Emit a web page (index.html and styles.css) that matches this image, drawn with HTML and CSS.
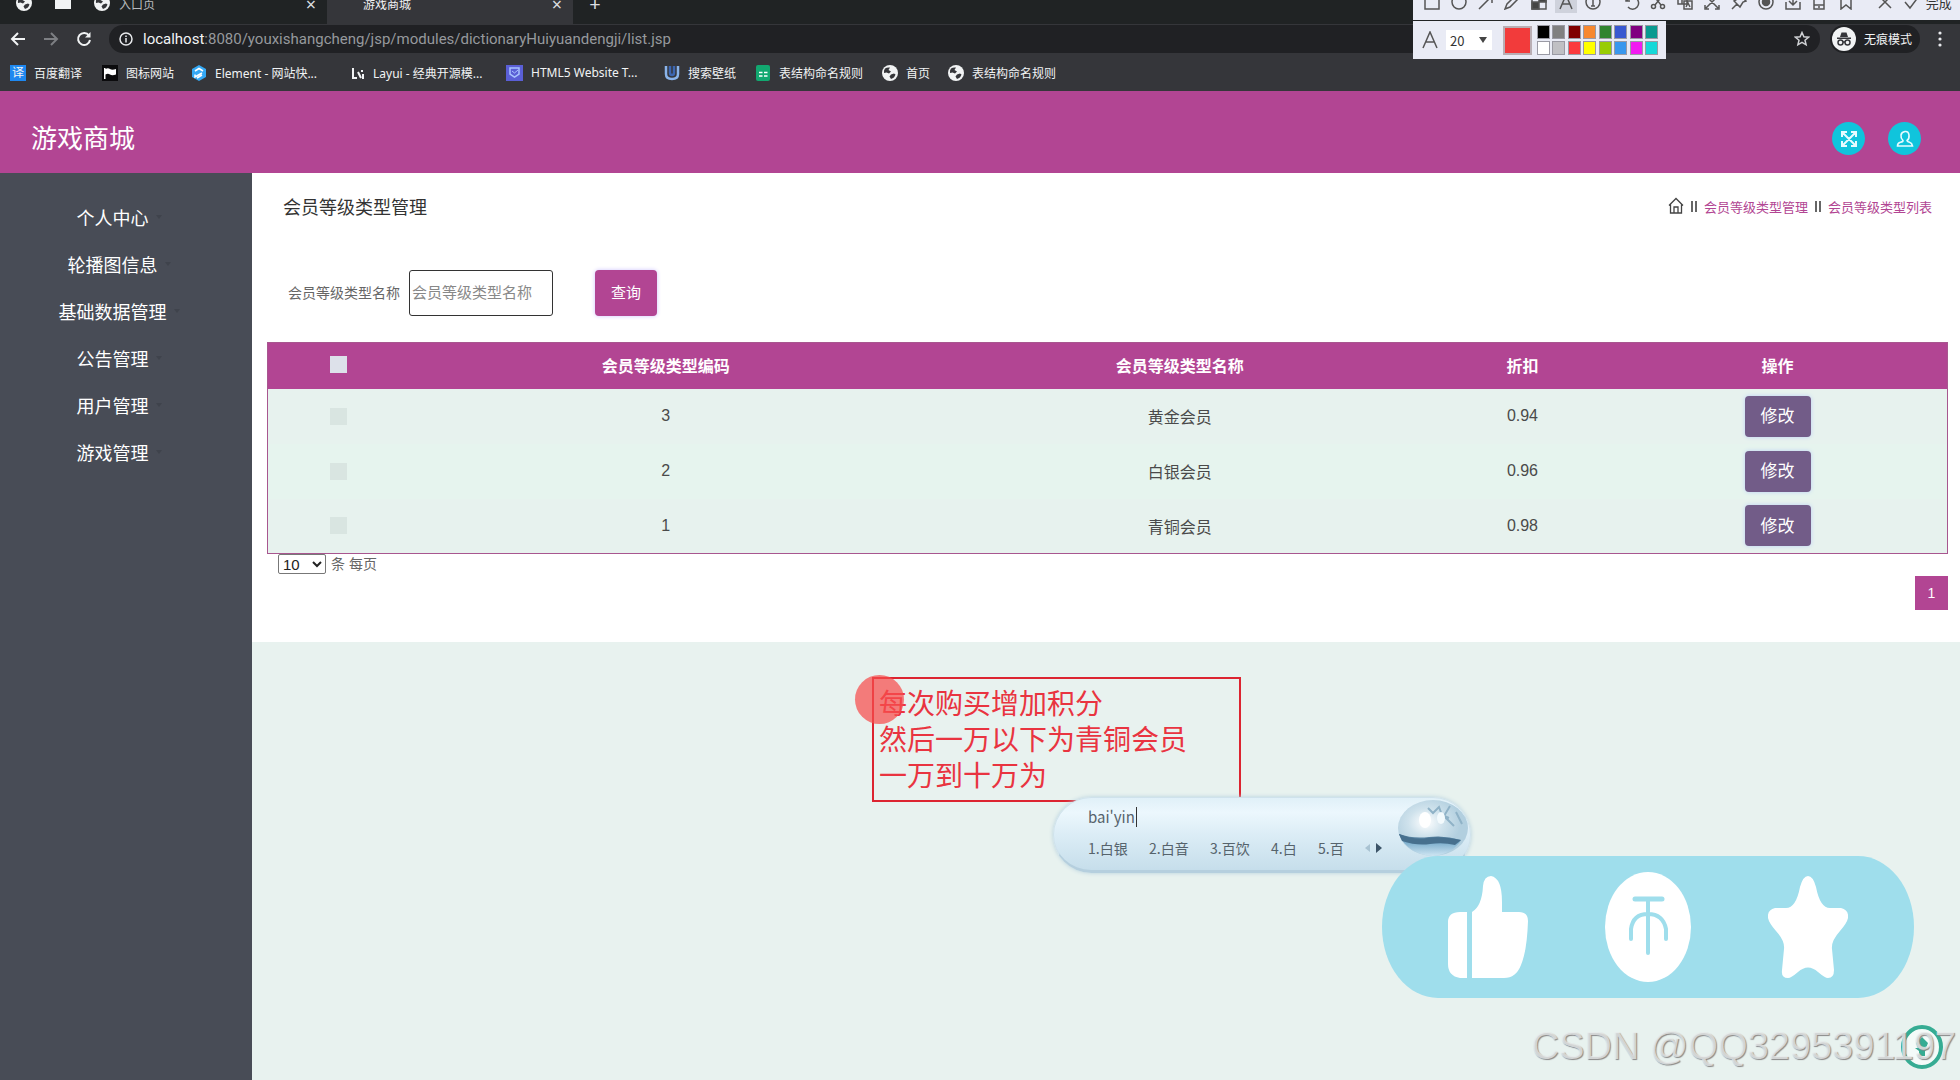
FILE: index.html
```html
<!DOCTYPE html>
<html lang="zh-CN">
<head>
<meta charset="utf-8">
<title>游戏商城</title>
<link rel="stylesheet" href="styles.css">
</head>
<body>
<svg class="defs" width="0" height="0" aria-hidden="true">
  <symbol id="globe" viewBox="0 0 16 16"><circle cx="8" cy="8" r="8" fill="#f1f3f4"/><path d="M3 3.500Q5 2 8 2.500L6.500 5 9 6.500 7 8.500 4.500 7.500 2 8Q1.600 5 3 3.500ZM9 9.500 12 8.500 13.500 9.500Q12.500 13 9 14L7.500 11.500Z" fill="#35363a"/></symbol>
</svg>
<div class="browser">
  <div class="tabs">
    <span class="pin"><svg width="16" height="16"><use href="#globe"/></svg></span>
    <span class="pin"><svg width="16" height="16"><path d="M0 2h16v12H0z" fill="#f1f3f4"/></svg></span>
    <span class="tab"><svg width="16" height="16"><use href="#globe"/></svg><span>入口页</span><button class="x" aria-label="关闭">×</button></span>
    <span class="tab active"><span>游戏商城</span><button class="x" aria-label="关闭">×</button></span>
    <button class="x add" aria-label="新标签页">+</button>
  </div>
  <div class="nav">
    <button class="ico" aria-label="后退"><svg width="16" height="16" fill="none" stroke="#f1f3f4" stroke-width="2"><path d="M15 8H2M8 2 2 8l6 6"/></svg></button>
    <button class="ico" aria-label="前进"><svg width="16" height="16" fill="none" stroke="#7d7f83" stroke-width="2"><path d="M1 8h13M8 2l6 6-6 6"/></svg></button>
    <button class="ico" aria-label="刷新"><svg width="16" height="16" fill="none" stroke="#f1f3f4" stroke-width="2"><path d="M13 4.500A6 6 0 1 0 14 9"/><path d="M14.500 1v5.500H9z" fill="#f1f3f4" stroke="none"/></svg></button>
    <div class="omni">
      <svg width="14" height="14" fill="none" stroke="#e8eaed" stroke-width="1.500"><circle cx="7" cy="7" r="6"/><path d="M7 6v4.500M7 3.500V5"/></svg>
      <span class="url"><b>localhost</b>:8080/youxishangcheng/jsp/modules/dictionaryHuiyuandengji/list.jsp</span>
      <svg width="16" height="16" fill="none" stroke="#d0d2d5" stroke-width="1.500"><path d="m8 1.500 1.900 4.300 4.600.4-3.500 3 1.100 4.600L8 11.400l-4.100 2.400L5 9.200l-3.500-3 4.600-.4z"/></svg>
    </div>
    <span class="incog"><svg width="24" height="24"><circle cx="12" cy="12" r="12" fill="#f1f3f4"/><path d="M8 10 9.500 5.500h5L16 10zM5 10.500h14v1.500H5z" fill="#35363a"/><g fill="none" stroke="#35363a" stroke-width="1.500"><circle cx="8.500" cy="15.500" r="2.500"/><circle cx="15.500" cy="15.500" r="2.500"/><path d="M11 15h2"/></g></svg>无痕模式</span>
    <button class="ico more" aria-label="菜单"><svg width="4" height="16" fill="#e8eaed"><circle cx="2" cy="2" r="1.600"/><circle cx="2" cy="8" r="1.600"/><circle cx="2" cy="14" r="1.600"/></svg></button>
  </div>
  <div class="marks">
    <a href="#"><span class="yi">译</span>百度翻译</a>
    <a href="#"><svg width="16" height="16"><path d="M0 0h16v16H0z" fill="#0b0b0d"/><path d="M2 3v11h1.500V9.500Q6 8 8 9.500t6 0V4Q10 5.500 8 4T3.500 4V3z" fill="#fff"/></svg>图标网站</a>
    <a href="#"><svg width="16" height="16"><path d="m8 0 7 4v8l-7 4-7-4V4z" fill="#35a9f5"/><path d="m4 6 4-2.500L12 6M4 9.500V12l7-4M6 13l5-3" stroke="#fff" stroke-width="1.500" fill="none"/></svg>Element - 网站快...</a>
    <a href="#"><svg width="14" height="16" fill="none" stroke="#f1f3f4" stroke-width="2"><path d="M2 3v10h4M7 7l3 6M11 5v2M12 9v5"/></svg>Layui - 经典开源模...</a>
    <a href="#"><svg width="17" height="16"><path d="M0 0h17v16H0z" fill="#5a5fd6"/><path d="M4 3h9v6l-4.500 3L4 9z" fill="none" stroke="#a9c4ff" stroke-width="1.500"/><path d="m6 6 2.500 2L12 5" stroke="#a9c4ff" fill="none"/></svg>HTML5 Website T...</a>
    <a href="#"><svg width="16" height="16" fill="none" stroke-width="2.500"><path d="M2 1v8q0 5 6 5t6-5V1" stroke="#8ab4ea"/><path d="M6 1v7q0 2 2 2t2-2V1" stroke="#3c66b0"/></svg>搜索壁纸</a>
    <a href="#"><svg width="16" height="16"><rect x="1" width="14" height="16" rx="2" fill="#12a870"/><path d="M4 7.500h3.500M9 7.500h3.500M4 11h3.500M9 11h3.500" stroke="#fff" stroke-width="1.500"/></svg>表结构命名规则</a>
    <a href="#"><svg width="16" height="16"><use href="#globe"/></svg>首页</a>
    <a href="#"><svg width="16" height="16"><use href="#globe"/></svg>表结构命名规则</a>
  </div>
</div>

<header class="top">
  <h1>游戏商城</h1>
  <div class="acts">
    <button class="round" aria-label="全屏"><svg width="18" height="18" fill="none" stroke="#e6fbff" stroke-width="2"><path d="M2 7V2h5M11 2h5v5M16 11v5h-5M7 16H2v-5M2 2l14 14M16 2 2 16"/></svg></button>
    <button class="round" aria-label="个人"><svg width="18" height="18" fill="none" stroke="#e6fbff" stroke-width="1.600"><path d="M7 10.500Q4.500 8 5 5t4-3.500T13 5t-2 5.500q0 1 2.500 1.800T16.500 16h-15Q1.500 13 4.500 12.300T7 10.500z"/></svg></button>
  </div>
</header>

<div class="body">
  <nav class="side">
    <a href="#">个人中心</a><a href="#">轮播图信息</a><a href="#">基础数据管理</a><a href="#">公告管理</a><a href="#">用户管理</a><a href="#">游戏管理</a>
  </nav>
  <main>
    <section class="panel">
      <div class="head">
        <h2>会员等级类型管理</h2>
        <div class="crumb">
          <svg width="16" height="18" fill="none" stroke="#444" stroke-width="1.300"><path d="M1 8.500 8 1.500l7 7M2.500 7.500V16h11V7.500M6 16v-6h4v6"/></svg>
          <i></i><a href="#">会员等级类型管理</a><i></i><a href="#">会员等级类型列表</a>
        </div>
      </div>
      <form class="search">
        <label for="name">会员等级类型名称</label>
        <input id="name" type="text" placeholder="会员等级类型名称">
        <button type="button">查询</button>
      </form>
      <table>
        <colgroup><col class="c1"><col class="c2"><col class="c3"><col class="c4"><col class="c5"></colgroup>
        <thead><tr><th><input type="checkbox" aria-label="全选"></th><th>会员等级类型编码</th><th>会员等级类型名称</th><th>折扣</th><th>操作</th></tr></thead>
        <tbody>
          <tr><td><input type="checkbox" aria-label="选择 3"></td><td>3</td><td>黄金会员</td><td>0.94</td><td><button>修改</button></td></tr>
          <tr><td><input type="checkbox" aria-label="选择 2"></td><td>2</td><td>白银会员</td><td>0.96</td><td><button>修改</button></td></tr>
          <tr><td><input type="checkbox" aria-label="选择 1"></td><td>1</td><td>青铜会员</td><td>0.98</td><td><button>修改</button></td></tr>
        </tbody>
      </table>
      <div class="size"><select id="size"><option>10</option></select><label for="size">条 每页</label></div>
      <div class="pager"><button>1</button></div>
    </section>
  </main>
</div>

<div class="snip">
  <div class="tools">
    <svg width="16" height="16"><path d="M1 1h14v14H1z"/></svg>
    <svg width="16" height="16"><circle cx="8" cy="8" r="7"/></svg>
    <svg width="16" height="16"><path d="M1 15 14 2M7 2h7v7"/></svg>
    <svg width="16" height="16"><path d="m1 15 2-5 9-9 3 3-9 9z"/></svg>
    <svg width="16" height="16"><path d="M1 1h14v14H1z"/><path d="M1 8h7v7H1zM8 1h7v7H8z" fill="#444"/></svg>
    <svg class="on" width="16" height="16"><path d="M2 15 8 1l6 14M4 10h8"/></svg>
    <svg width="16" height="16"><circle cx="8" cy="8" r="7"/><path d="M8 4v8M6 12h4"/></svg>
    <i></i>
    <svg width="16" height="16"><path d="M2 3v4h4M3 7a6 6 0 1 1 1 6"/></svg>
    <svg width="16" height="16"><path d="m3 1 8 10M13 1 5 11"/><circle cx="3.500" cy="12.500" r="2"/><circle cx="12.500" cy="12.500" r="2"/></svg>
    <svg width="16" height="16"><path d="M1 1h9v9H1zM7 7h8v8H7zM1 5h9M5 1v9M9 13l2-4 2 4"/></svg>
    <svg width="16" height="16"><path d="m2 2 12 12M14 2 2 14M1 11v4h4M15 11v4h-4"/></svg>
    <svg width="16" height="16"><path d="m9 1 6 6-3 1-3 5-6-6 5-3zM6 10l-5 5"/></svg>
    <svg width="16" height="16"><circle cx="8" cy="8" r="7"/><circle cx="8" cy="8" r="3.500" fill="#555"/></svg>
    <svg width="16" height="16"><path d="M1 8v7h14V8M8 1v10M4 7l4 4 4-4"/></svg>
    <svg width="16" height="16"><path d="M3 1h10v14H3zM3 11h10M7 13h2"/></svg>
    <svg width="16" height="16"><path d="M3 1h10v14l-5-4-5 4z"/></svg>
    <i></i>
    <svg width="16" height="16"><path d="m2 2 12 12M14 2 2 14"/></svg>
    <button><svg width="16" height="16"><path d="m1 8 5 6 9-12"/></svg>完成</button>
  </div>
  <div class="palette">
    <svg width="18" height="18"><path d="M2 17 9 1l7 16M5 11h8"/></svg>
    <span class="fs">20<svg width="8" height="6"><path class="tri" d="M0 0h8L4 6z"/></svg></span>
    <span class="cur"></span>
    <div class="sw"><b class="k1"></b><b class="k2"></b><b class="k3"></b><b class="k4"></b><b class="k5"></b><b class="k6"></b><b class="k7"></b><b class="k8"></b><b class="k9"></b><b class="k10"></b><b class="k11"></b><b class="k12"></b><b class="k13"></b><b class="k14"></b><b class="k15"></b><b class="k16"></b></div>
  </div>
</div>

<div class="note">每次购买增加积分<br>然后一万以下为青铜会员<br>一万到十万为</div>
<span class="dot"></span>

<div class="ime">
  <div class="typed">bai'yin</div>
  <div class="cands"><span class="w2">1.白银</span><span class="w2">2.白音</span><span class="w2">3.百饮</span><span class="w1">4.白</span><span class="w1">5.百</span>
    <svg width="18" height="10"><path d="M5 1v8L0 5z" fill="#a9c3d2"/><path d="M11 0v10l6-5z" fill="#3c5468"/></svg></div>
  <svg class="orb" width="76" height="60">
    <defs>
      <radialGradient id="og" cx=".4" cy=".4"><stop offset="0" stop-color="#fff"/><stop offset=".5" stop-color="#cfe2ec"/><stop offset="1" stop-color="#b2cfdf"/></radialGradient>
      <linearGradient id="wg" x2="0" y2="1"><stop offset="0" stop-color="#3d6584"/><stop offset=".4" stop-color="#7fb0ce"/><stop offset="1" stop-color="#cfe6f3"/></linearGradient>
    </defs>
    <ellipse cx="39" cy="30" rx="35" ry="28" fill="url(#og)"/>
    <path d="M5 36q14 5 30 3t32 3q-8 14-28 16-26-2-34-22z" fill="url(#wg)"/>
    <path d="M5 36q14 6 28 4t34 2l-6 5q-12-3-25-1T8 43z" fill="#47708e"/>
    <path d="m34 10 5 5 6-6 3 8 7 3M56 8l-6 10 10 10M62 14l6 12" fill="none" stroke="#8fb2c7" stroke-width="2"/>
    <ellipse cx="31" cy="22" rx="6" ry="8" fill="#fff"/>
    <ellipse cx="47" cy="20" rx="4" ry="6" fill="#f3fafd"/>
  </svg>
</div>

<div class="triple">
  <svg width="80" height="102" fill="#fff"><path d="M12 36h7v66h-7Q0 100 0 88V46q0-10 12-10zM24 36q10-6 11-26Q36 0 43 0q11 2 11 26v10h17q9 0 9 9-1 30-7 44-5 13-17 13H24z"/></svg>
  <svg width="86" height="110"><ellipse cx="43" cy="55" rx="43" ry="55" fill="#fff"/><g fill="none" stroke="#9fdeec" stroke-width="4" stroke-linecap="round"><path d="M30 27h27" stroke-width="5"/><path d="M43 28v53M26 67V57q2-15 17-15t18 15v10"/></g></svg>
  <svg width="80" height="102" fill="#fff"><path d="M40 0q5 0 8 11 4 21 14 21h11q8 2 7 10-1 5-8 13-9 10-8 18l2 21q0 8-6 8-3 0-10-6-10-9-20 0-7 6-10 6-7 0-6-8l2-21q1-8-8-18-7-8-8-13-1-8 7-10h11q10 0 14-21 3-11 8-11z"/></svg>
</div>

<svg class="mic" width="42" height="44"><ellipse cx="21" cy="22" rx="19" ry="20" fill="#f4fbf9" stroke="#36ac93" stroke-width="4"/><path d="m21 12 6 6-2 5h3l-4 3v5h-6v-5l-4-3h3l-2-5z" fill="#36ac93"/></svg>
<div class="mark">CSDN @QQ3295391197</div>
</body>
</html>
```
FILE: styles.css
```css
* { box-sizing: border-box; }
body {
  margin: 0;
  min-height: 100vh;
  display: flex;
  flex-direction: column;
  position: relative;
  overflow-x: hidden;
  background: #e8f2ef;
  color: #4a4a4a;
  font-family: "Liberation Sans", "Noto Sans CJK SC", sans-serif;
}
a { text-decoration: none; color: inherit; }
h1, h2 { margin: 0; font-weight: 400; }
button, input, select { font-family: inherit; margin: 0; }
button { padding: 0; border: 0; background: none; color: inherit; }
svg { display: block; flex: none; }
.defs { position: absolute; }

/* browser chrome */
.browser {
  background: #35363a;
  color: #f1f3f4;
  font-family: "Noto Sans", "Noto Sans CJK SC", sans-serif;
  font-size: 12px;
}
.tabs {
  display: flex;
  align-items: flex-start;
  height: 24px;
  background: #202324;
  overflow: hidden;
  line-height: 10px;
}
.tabs svg { margin-top: -5px; }
.pin { width: 40px; padding-left: 12px; }
.pin:first-child { width: 43px; padding-left: 16px; }
.tab { display: flex; align-items: flex-start; gap: 9px; width: 244px; height: 24px; padding-left: 11px; color: #b8babd; }
.active { width: 246px; padding-left: 36px; background: #35363a; color: #f1f3f4; }
.x { width: 32px; height: 8px; font-size: 18px; line-height: 8px; color: #dcdee0; }
.tab .x { margin-left: auto; }
.add { width: 44px; font-size: 20px; }
.nav { display: flex; align-items: center; height: 30px; padding-left: 10px; }
.ico { width: 33px; display: flex; }
.omni {
  flex: 1;
  display: flex;
  align-items: center;
  gap: 10px;
  height: 28px;
  padding: 0 10px;
  border-radius: 14px;
  background: #202124;
}
.url { flex: 1; font-family: Roboto, sans-serif; font-size: 15px; color: #96999d; }
.url b { font-weight: 400; color: #f1f3f4; }
.incog {
  display: flex;
  align-items: center;
  gap: 8px;
  height: 28px;
  margin-left: 10px;
  padding: 0 8px 0 2px;
  border-radius: 14px;
  background: #202124;
}
.more { width: 40px; justify-content: center; }
.marks {
  display: grid;
  grid-template-columns: 92px 89px 160px 155px 158px 91px 127px 66px auto;
  align-items: center;
  height: 37px;
  padding-left: 10px;
}
.marks a { display: flex; align-items: center; gap: 8px; white-space: nowrap; }
.yi { width: 16px; background: #1e88f0; text-align: center; line-height: 16px; }

/* site header */
.top {
  display: flex;
  align-items: center;
  justify-content: space-between;
  height: 82px;
  padding: 13px 39px 0 31px;
  background: #b24593;
  color: #fff;
}
.top h1 { font-size: 26px; line-height: 32px; }
.acts { display: flex; gap: 23px; }
.round {
  display: flex;
  align-items: center;
  justify-content: center;
  width: 33px;
  height: 33px;
  border-radius: 50%;
  background: #10c4dc;
}

.body { flex: 1; display: flex; }
.side { width: 252px; padding-top: 20px; background: #484c56; color: #fff; font-size: 18px; }
.side a { display: flex; align-items: center; justify-content: center; height: 47px; padding-right: 14px; }
.side a::after {
  content: "";
  margin-left: 7px;
  border: solid transparent;
  border-width: 4px 3px 0;
  border-top-color: #3f434c;
}
main { flex: 1; }
.panel { padding: 0 12px 32px 15px; background: #fff; }
.head { display: flex; justify-content: space-between; align-items: center; height: 66px; padding: 0 16px; }
.head h2 { font-size: 18px; color: #333; }
.crumb { display: flex; align-items: center; gap: 7px; font-size: 13px; color: #b24593; }
.crumb i { width: 6px; height: 11px; border: solid #666; border-width: 0 2px; }
.search { display: flex; align-items: center; padding: 31px 21px 26px; font-size: 14px; color: #666; }
.search label { width: 121px; padding-bottom: 3px; }
.search input {
  width: 144px;
  height: 46px;
  padding: 0 2px 2px;
  border: 1px solid #333;
  border-radius: 3px;
  background: #fff;
  font-size: 15px;
}
.search input::placeholder { color: #888; }
.search button {
  width: 62px;
  height: 46px;
  margin-left: 42px;
  padding-bottom: 3px;
  border-radius: 4px;
  background: #b24593;
  box-shadow: 0 0 4px #cfc4ff;
  color: #fff;
  font-size: 15px;
}
table { width: 100%; table-layout: fixed; border-collapse: collapse; border: 1px solid #a8568f; font-size: 16px; }
.c1 { width: 8.4%; }
.c2 { width: 30.6%; }
.c3 { width: 30.6%; }
.c4 { width: 10.2%; }
.c5 { width: 20.2%; }
th { height: 46px; padding: 0 0 2px; background: #b24593; color: #fff; }
td { height: 55px; padding: 0; background: #e6f4ee; text-align: center; }
tr:nth-child(odd) td { background: #e7f2ee; }
th input, td input { appearance: none; display: block; width: 17px; height: 17px; margin: auto; background: #dde1ea; }
td input { background: #d9e5e1; }
td button {
  width: 66px;
  height: 41px;
  padding-bottom: 3px;
  border-radius: 4px;
  background: #725c88;
  box-shadow: 0 0 4px #bcd0f5;
  color: #fff;
  font-size: 17px;
}
.size { display: flex; gap: 5px; padding-left: 11px; font-size: 14px; line-height: 20px; color: #666; }
.size select { width: 48px; height: 20px; padding: 0; border: 1px solid #777; border-radius: 2px; background: #fff; color: #222; font-size: 15px; }
.pager { display: flex; justify-content: flex-end; padding-top: 2px; }
.pager button { width: 33px; height: 34px; background: #b24593; color: #fff; font-size: 14px; }

/* screenshot tool, floating over the window */
.snip { position: absolute; top: 0; right: 0; width: 547px; font-family: "Noto Sans CJK SC", sans-serif; color: #333; }
.snip svg { fill: none; stroke: #555; stroke-width: 1.500; }
.snip .tri { fill: #444; stroke: none; }
.tools { display: flex; justify-content: space-between; align-items: flex-start; height: 20px; padding: 0 8px 0 11px; background: #e9ebf5; overflow: hidden; }
.tools svg { margin-top: -6px; }
.tools .on { background: #cfd2dc; outline: 3px solid #cfd2dc; }
.tools i { width: 1px; }
.tools button { display: flex; gap: 6px; font-size: 13px; line-height: 6px; }
.palette { display: flex; align-items: center; width: 253px; height: 38px; margin-top: 1px; padding: 0 8px; background: #e9ebf5; }
.fs { display: flex; align-items: center; justify-content: space-between; width: 46px; height: 20px; margin-left: 7px; padding: 0 5px 0 4px; background: #fff; font-size: 13px; }
.cur { width: 29px; height: 29px; margin: 0 5px 0 11px; border: 2px solid #b9aeb4; background: #f23b3b; }
.sw { flex: 1; display: grid; grid-template-columns: repeat(8, 13px); justify-content: space-between; gap: 2px 0; }
.sw b { height: 14px; border: 1px solid #9a9aa4; }
.k1 { background: #000; } .k2 { background: #808080; } .k3 { background: #800000; } .k4 { background: #f7882f; }
.k5 { background: #308430; } .k6 { background: #3858d0; } .k7 { background: #800080; } .k8 { background: #099a90; }
.k9 { background: #fff; } .k10 { background: #c0c0c4; } .k11 { background: #fa3a3e; } .k12 { background: #ff0; }
.k13 { background: #98cc05; } .k14 { background: #3997ed; } .k15 { background: #f11bf1; } .k16 { background: #16d8d8; }

/* annotation being typed */
.note {
  position: absolute;
  left: 872px;
  top: 677px;
  width: 369px;
  height: 125px;
  padding: 5px;
  border: 2px solid #dc2430;
  color: #e93440;
  font-family: "Noto Sans CJK SC", sans-serif;
  font-size: 28px;
  line-height: 36px;
  white-space: nowrap;
}
.dot { position: absolute; left: 855px; top: 675px; width: 49px; height: 49px; border-radius: 50%; background: rgba(246, 76, 76, .72); }
.ime {
  position: absolute;
  left: 1053px;
  top: 797px;
  width: 418px;
  height: 76px;
  padding: 9px 0 0 34px;
  border-radius: 38px;
  border: 1px solid #cfe2ec;
  border-bottom: 3px solid #b5cfde;
  background: linear-gradient(#e0f0f8, #ecf7fd 20%, #dcedf6 50%, #c6deeb);
  box-shadow: 0 0 4px #b5d0de;
  color: #56636c;
  font-family: "Noto Sans CJK SC", sans-serif;
  font-size: 15px;
  line-height: 24px;
}
.typed { width: 49px; border-right: 1px solid #333; line-height: 20px; }
.cands { display: flex; align-items: center; gap: 17px; margin-top: 9px; font-size: 14px; }
.w2 { width: 44px; }
.w1 { width: 30px; }
.orb { position: absolute; right: 0; top: 0; }
.triple {
  position: absolute;
  left: 1382px;
  top: 856px;
  width: 532px;
  height: 142px;
  display: flex;
  align-items: center;
  justify-content: space-between;
  padding: 0 66px;
  border-radius: 56px / 71px;
  background: #9fdeec;
}
.mic { position: absolute; right: 17px; top: 1025px; }
.mark {
  position: absolute;
  right: 4px;
  top: 1024px;
  font-size: 38px;
  line-height: 44px;
  color: rgba(235, 238, 238, .75);
  text-shadow: 1px 1px 1px #888;
  white-space: nowrap;
}
```
